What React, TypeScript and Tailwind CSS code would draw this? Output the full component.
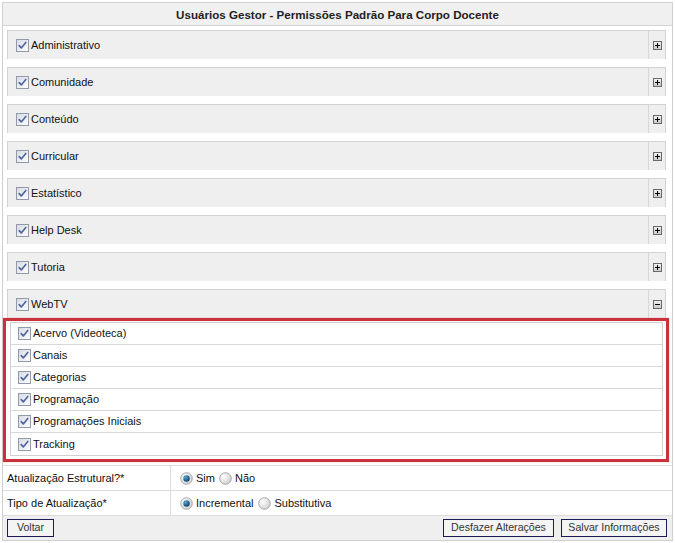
import React from "react";

function CheckBox() {
  return (
    <svg width="13" height="13" viewBox="0 0 13 13" className="shrink-0">
      <defs>
        <linearGradient id="cbg" x1="0" y1="0" x2="1" y2="1">
          <stop offset="0" stopColor="#d5d9e2" />
          <stop offset="1" stopColor="#ffffff" />
        </linearGradient>
      </defs>
      <rect x="0.5" y="0.5" width="12" height="12" fill="url(#cbg)" stroke="#9199aa" />
      <path d="M3.2 6.6 L5.3 8.9 L9.8 3.4" fill="none" stroke="#4d64a0" strokeWidth="1.6" strokeLinecap="round" strokeLinejoin="round" />
    </svg>
  );
}

function ToggleIcon({ open }: { open: boolean }) {
  return (
    <svg width="9" height="9" viewBox="0 0 9 9">
      <defs>
        <linearGradient id="tg" x1="0" y1="0" x2="0" y2="1">
          <stop offset="0" stopColor="#f4f4f4" />
          <stop offset="1" stopColor="#c8c8c8" />
        </linearGradient>
      </defs>
      <rect x="0.5" y="0.5" width="8" height="8" fill="url(#tg)" stroke="#6a6a6a" />
      <path d="M2 4.5 H7" stroke="#000" strokeWidth="1" />
      {!open && <path d="M4.5 2 V7" stroke="#000" strokeWidth="1" />}
    </svg>
  );
}

function Radio({ checked }: { checked: boolean }) {
  return (
    <svg width="13" height="13" viewBox="0 0 13 13" className="shrink-0">
      <defs>
        <radialGradient id="rg" cx="0.35" cy="0.35" r="0.7">
          <stop offset="0" stopColor="#ffffff" />
          <stop offset="1" stopColor="#cfcfcf" />
        </radialGradient>
        <radialGradient id="rdot" cx="0.35" cy="0.3" r="0.7">
          <stop offset="0" stopColor="#5aa6d2" />
          <stop offset="1" stopColor="#0d456f" />
        </radialGradient>
      </defs>
      <circle cx="6.5" cy="6.5" r="5.8" fill="url(#rg)" stroke="#a3a3a3" strokeWidth="0.9" />
      {checked && <circle cx="6.5" cy="6.5" r="3.2" fill="url(#rdot)" />}
    </svg>
  );
}

const groups = [
  "Administrativo",
  "Comunidade",
  "Conteúdo",
  "Curricular",
  "Estatístico",
  "Help Desk",
  "Tutoria",
];

const subs = [
  "Acervo (Videoteca)",
  "Canais",
  "Categorias",
  "Programação",
  "Programações Iniciais",
  "Tracking",
];

function Panel({ label, open }: { label: string; open: boolean }) {
  return (
    <div className="h-[29px] flex border-t border-x border-[#d3d3d3] bg-[#efefef]">
      <div className="flex-1 flex items-center pl-[8px] gap-[2px]">
        <CheckBox />
        <span>{label}</span>
      </div>
      <div className="w-[17px] border-l border-[#d8d8d8] flex items-center justify-center">
        <ToggleIcon open={open} />
      </div>
    </div>
  );
}

const btn =
  "h-[18px] border border-[#1c1c54] bg-[#f4f4f4] text-[10.6px] text-[#333] font-['Liberation_Sans',Arial,sans-serif]";

export default function App() {
  return (
    <div className="w-[675px] h-[543px] bg-white text-[11px] text-[#111] font-['Liberation_Sans',Arial,sans-serif] pt-[2px] pl-[2px]">
      <div className="w-[671px] h-[539px] border border-[#cfcfcf] flex flex-col">
        <div className="h-[23px] pt-[1px] bg-[#f0f0f0] border-b border-[#d3d3d3] flex items-center justify-center font-bold text-[11.6px] text-[#222]">
          Usuários Gestor - Permissões Padrão Para Corpo Docente
        </div>
        <div className="pl-[4px] pr-[6px] pt-[4px] flex flex-col gap-[8px]">
          {groups.map((g) => (
            <Panel key={g} label={g} open={false} />
          ))}
          <div className="flex flex-col">
            <Panel label="WebTV" open={true} />
            <div className="-ml-[4px] -mr-[3px] border-[3px] border-[#c9313b] pt-[1px] pl-[4px] pr-[3px] pb-[3px] shadow-[0_0_1px_#e88]">
              <div className="border border-[#d0d0d0]">
                {subs.map((s, i) => (
                  <div
                    key={s}
                    className={
                      "h-[22px] flex items-center pl-[7px] gap-[2px] " +
                      (i < subs.length - 1 ? "border-b border-[#d8d8d8]" : "")
                    }
                  >
                    <CheckBox />
                    <span>{s}</span>
                  </div>
                ))}
              </div>
            </div>
          </div>
        </div>
        <div className="mt-[3px] border-t border-[#dcdcdc]">
          <div className="h-[25px] flex border-b border-[#dcdcdc]">
            <div className="w-[168px] border-r border-[#dcdcdc] flex items-center pl-[4px]">
              Atualização Estrutural?*
            </div>
            <div className="flex items-center pl-[9px] gap-[3px]">
              <Radio checked={true} />
              <span className="mr-[1px]">Sim</span>
              <Radio checked={false} />
              <span>Não</span>
            </div>
          </div>
          <div className="h-[25px] flex border-b border-[#dcdcdc]">
            <div className="w-[168px] border-r border-[#dcdcdc] flex items-center pl-[4px]">
              Tipo de Atualização*
            </div>
            <div className="flex items-center pl-[9px] gap-[3px]">
              <Radio checked={true} />
              <span className="mr-[2px]">Incremental</span>
              <Radio checked={false} />
              <span>Substitutiva</span>
            </div>
          </div>
        </div>
        <div className="flex-1 bg-[#efefef] flex items-center justify-between pl-[4px] pr-[5px]">
          <button className={btn + " w-[47px]"}>Voltar</button>
          <div className="flex gap-[7px]">
            <button className={btn + " w-[111px]"}>Desfazer Alterações</button>
            <button className={btn + " w-[106px]"}>Salvar Informações</button>
          </div>
        </div>
      </div>
    </div>
  );
}
